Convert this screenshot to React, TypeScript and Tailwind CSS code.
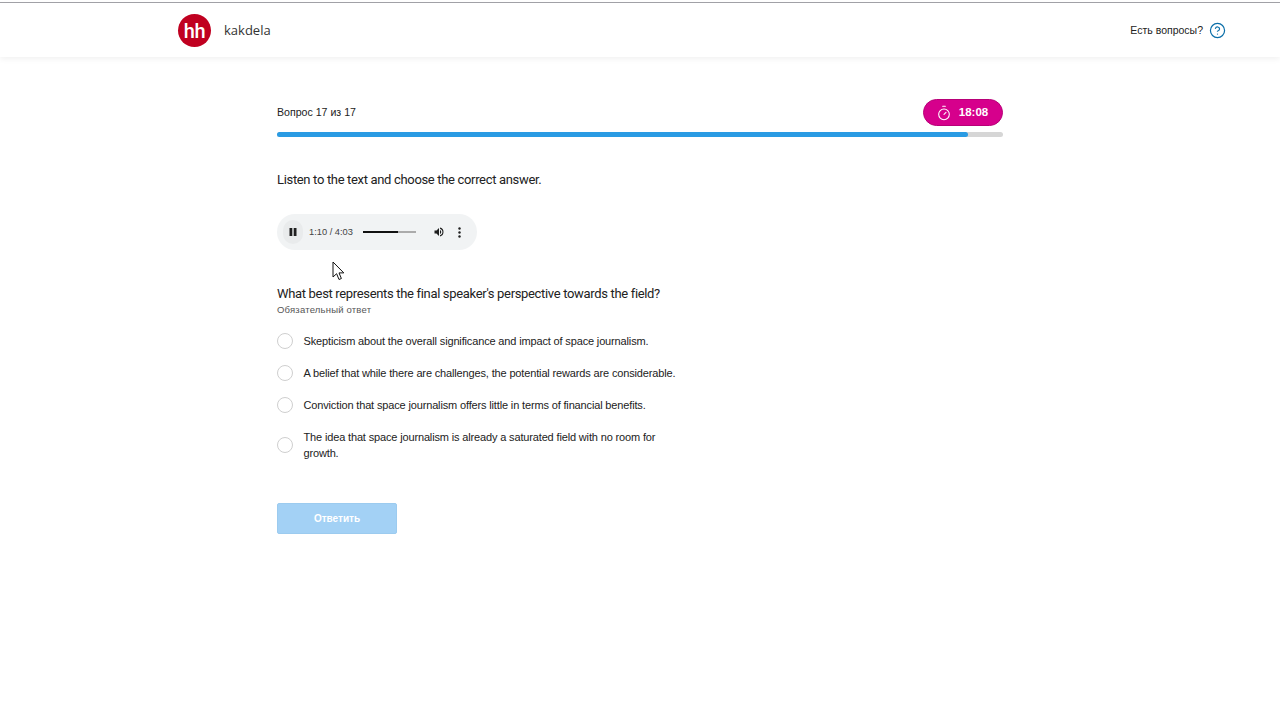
import { Timer, HelpCircle } from 'lucide-react';

const answers = [
  'Skepticism about the overall significance and impact of space journalism.',
  'A belief that while there are challenges, the potential rewards are considerable.',
  'Conviction that space journalism offers little in terms of financial benefits.',
  'The idea that space journalism is already a saturated field with no room for growth.',
];

const Radio = ({ text }: { text: string }) => (
  <label className="flex items-center min-h-[16px]">
    <span className="w-4 h-4 shrink-0 rounded-full border border-[#cfcfcf] bg-white" />
    <span className="ml-[10.5px] w-[372px] text-[11px] leading-4 tracking-[-0.15px] text-[#222]">{text}</span>
  </label>
);

const AudioBar = () => (
  <div className="mt-[25px] flex items-center w-[200px] h-[36px] rounded-full bg-[#f1f3f4] pl-[6px] text-[#1f1f1f]">
    <span className="flex items-center justify-center w-[20px] h-[24px] rounded-full bg-[#e9ebec]">
      <svg width="10" height="10" viewBox="0 0 10 10" fill="currentColor">
        <rect x="1.5" y="1" width="2.8" height="8" />
        <rect x="5.7" y="1" width="2.8" height="8" />
      </svg>
    </span>
    <span className="ml-[6px] pt-[1px] w-[44px] text-[9.3px] text-[#444] whitespace-nowrap">1:10 / 4:03</span>
    <span className="ml-[10px] flex w-[53px] h-[2px] bg-[#ababab]">
      <span className="w-[35px] h-full bg-[#111]" />
    </span>
    <svg className="ml-[17px]" width="12" height="12" viewBox="0 0 24 24" fill="currentColor">
      <path d="M3 9v6h4l5 5V4L7 9H3zm13.5 3A4.5 4.5 0 0 0 14 7.97v8.05A4.5 4.5 0 0 0 16.5 12zM14 3.23v2.06a7 7 0 0 1 0 13.42v2.06a9 9 0 0 0 0-17.54z" />
    </svg>
    <svg className="ml-[13px]" width="3" height="11" viewBox="0 0 3 11" fill="currentColor">
      <circle cx="1.5" cy="1.5" r="1.2" />
      <circle cx="1.5" cy="5.5" r="1.2" />
      <circle cx="1.5" cy="9.5" r="1.2" />
    </svg>
  </div>
);

export default function App() {
  return (
    <div className="relative min-h-[720px] bg-white overflow-hidden font-['Liberation_Sans',Arial,sans-serif] text-[#222]">
      <div className="h-[1px] mt-[2px] bg-[#a3a3a8]" />
      <header className="h-[54px] pt-[1px] bg-white shadow-[0_2px_6px_rgba(0,0,0,0.06)] flex items-center justify-between pl-[178px] pr-[54px]">
        <div className="flex items-center">
          <div className="w-[33px] h-[33px] rounded-full bg-[#c00020] flex items-center justify-center text-white font-medium text-[20px] tracking-[-0.3px] font-['Roboto',sans-serif]">
            hh
          </div>
          <span className="ml-[13px] text-[13px] text-[#333] font-['Open_Sans',sans-serif]">kakdela</span>
        </div>
        <div className="flex items-center">
          <span className="text-[10.5px] text-[#222]">Есть вопросы?</span>
          <HelpCircle className="ml-[6px] text-[#0a6ea8]" size={17} strokeWidth={1.7} />
        </div>
      </header>

      <main className="w-[726px] ml-[277px] pt-[42px]">
        <div className="flex items-center justify-between h-[27px]">
          <span className="text-[10.6px]">Вопрос 17 из 17</span>
          <div className="flex items-center justify-center w-[80px] h-[27px] rounded-full bg-[#d6008c] border border-[#b80078] text-white pr-[2px]">
            <Timer size={16} strokeWidth={1.6} />
            <span className="ml-[7px] text-[11.5px] font-bold">18:08</span>
          </div>
        </div>
        <div className="mt-[6px] h-[5px] rounded-full bg-[#d6d6d6]">
          <div className="h-full w-[691px] rounded-full bg-[#2a9be3]" />
        </div>

        <p className="mt-[34px] text-[13px] leading-[18px] text-[#222] font-['Roboto',sans-serif] tracking-[-0.33px]">
          Listen to the text and choose the correct answer.
        </p>

        <AudioBar />

        <p className="mt-[35px] text-[13px] leading-[18px] text-[#222] font-['Roboto',sans-serif] tracking-[-0.33px]">
          What best represents the final speaker's perspective towards the field?
        </p>
        <p className="mt-[1px] text-[9.5px] leading-[12px] text-[#555] tracking-[0.2px]">Обязательный ответ</p>

        <div className="mt-[17px] flex flex-col gap-4">
          {answers.map((a) => (
            <Radio key={a} text={a} />
          ))}
        </div>

        <button className="mt-[42px] block w-[120px] h-[31px] rounded-[2px] bg-[#a3d1f5] border border-[#9ccbef] text-white text-[10px] font-bold">
          Ответить
        </button>
      </main>

      {/* mouse cursor */}
      <svg className="absolute left-[332px] top-[261px]" width="13" height="20" viewBox="0 0 13 20">
        <path d="M1 1v15l3.6-3.3 2.4 5.8 2.4-1-2.4-5.6h4.8z" fill="#fff" stroke="#111" strokeWidth="1" />
      </svg>
    </div>
  );
}
